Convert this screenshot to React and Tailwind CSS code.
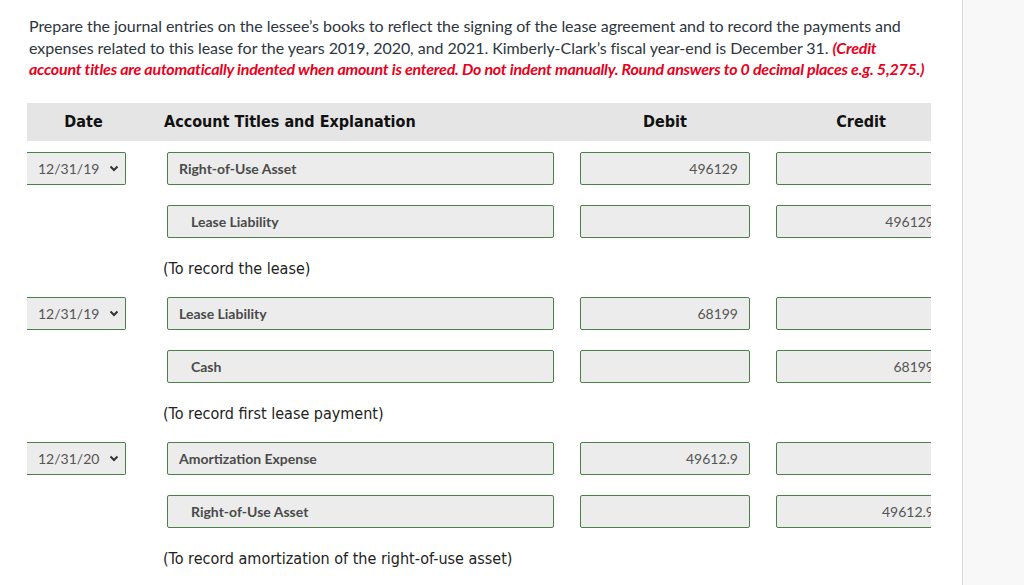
import React from 'react'

const entries = [
  {
    date: '12/31/19',
    lines: [
      { title: 'Right-of-Use Asset', debit: '496129', credit: '' },
      { title: 'Lease Liability', debit: '', credit: '496129', indent: true },
    ],
    note: '(To record the lease)',
  },
  {
    date: '12/31/19',
    lines: [
      { title: 'Lease Liability', debit: '68199', credit: '' },
      { title: 'Cash', debit: '', credit: '68199', indent: true },
    ],
    note: '(To record first lease payment)',
  },
  {
    date: '12/31/20',
    lines: [
      { title: 'Amortization Expense', debit: '49612.9', credit: '' },
      { title: 'Right-of-Use Asset', debit: '', credit: '49612.9', indent: true },
    ],
    note: '(To record amortization of the right-of-use asset)',
  },
]

const lato = { fontFamily: 'Lato, "Open Sans", sans-serif' }
const tahomaLike = { fontFamily: '"DejaVu Sans Condensed", "DejaVu Sans", sans-serif' }

const Row = ({ date, line }) => {
  return (
    <div className="flex h-[33px]">
      <div className="w-[136px] shrink-0">
        {date && (
          <div className="h-[33px] w-[99px] flex items-center justify-between pl-[11px] pr-[6px] bg-[#ececec] border-y border-r border-[#4b8048] rounded-r-[2px] text-[14px] text-[#555]">
            <span>{date}</span>
            <svg width="10" height="7" viewBox="0 0 10 7">
              <path d="M1.5 1.5l3.5 3.5 3.5-3.5" fill="none" stroke="#333" strokeWidth="2" />
            </svg>
          </div>
        )}
      </div>
      <div className="w-[417px] shrink-0 pl-[4px]">
        <div
          className={`h-[33px] w-[387px] flex items-center bg-[#ececec] border border-[#4b8048] rounded-[2px] text-[14px] font-bold text-[#4a4a4a] ${line.indent ? 'pl-[23px]' : 'pl-[11px]'}`}
        >
          {line.title}
        </div>
      </div>
      <div className="w-[196px] shrink-0">
        <div className="h-[33px] w-[170px] flex items-center justify-end pr-[11px] bg-[#ececec] border border-[#4b8048] rounded-[2px] text-[14px] text-[#555]">
          {line.debit}
        </div>
      </div>
      <div className="w-[170px] shrink-0">
        <div className="h-[33px] w-[170px] flex items-center justify-end pr-[11px] bg-[#ececec] border border-[#4b8048] rounded-[2px] text-[14px] text-[#555] whitespace-nowrap">
          {line.credit}
        </div>
      </div>
    </div>
  )
}

const App = () => {
  return (
    <div className="flex w-[1024px] h-[585px] overflow-hidden bg-white" style={lato}>
      <div className="w-[962px] shrink-0">
        {/* Instructions */}
        <p className="pl-[29px] pt-[15px] text-[16px] leading-[21.5px] text-[#2e3640] tracking-[-0.05px]">
          <span className="block">
            Prepare the journal entries on the lessee’s books to reflect the signing of the lease agreement and to record the payments and
          </span>
          <span className="block">
            expenses related to this lease for the years 2019, 2020, and 2021. Kimberly-Clark’s fiscal year-end is December 31.{' '}
            <span className="font-bold italic text-[#e8001c] tracking-[-0.23px]">(Credit</span>
          </span>
          <span className="block font-bold italic text-[#e8001c] tracking-[-0.23px]">
            account titles are automatically indented when amount is entered. Do not indent manually. Round answers to 0 decimal places e.g. 5,275.)
          </span>
        </p>

        {/* Journal table */}
        <div className="ml-[27px] mt-[23px] w-[904px] overflow-hidden">
          <div className="flex h-[38px] items-center bg-[#e5e5e5] text-[16px] font-bold text-[#111]" style={tahomaLike}>
            <div className="w-[113px] shrink-0 text-center">Date</div>
            <div className="w-[23px] shrink-0" />
            <div className="w-[417px] shrink-0 pl-[1px]">Account Titles and Explanation</div>
            <div className="w-[170px] shrink-0 text-center">Debit</div>
            <div className="w-[26px] shrink-0" />
            <div className="w-[170px] shrink-0 text-center">Credit</div>
          </div>

          <div className="pt-[11px]">
            {entries.map((entry, i) => (
              <div key={i}>
                <Row date={entry.date} line={entry.lines[0]} />
                <div className="mt-[20px]">
                  <Row line={entry.lines[1]} />
                </div>
                <div className="h-[59px] flex items-center pt-[4px] pl-[136px] text-[16px] text-[#222]" style={tahomaLike}>
                  {entry.note}
                </div>
              </div>
            ))}
          </div>
        </div>
      </div>

      {/* Side panel */}
      <div className="flex-1 border-l border-[#dcdcdc] bg-[#f8f8f8]" />
    </div>
  )
}

export default App
